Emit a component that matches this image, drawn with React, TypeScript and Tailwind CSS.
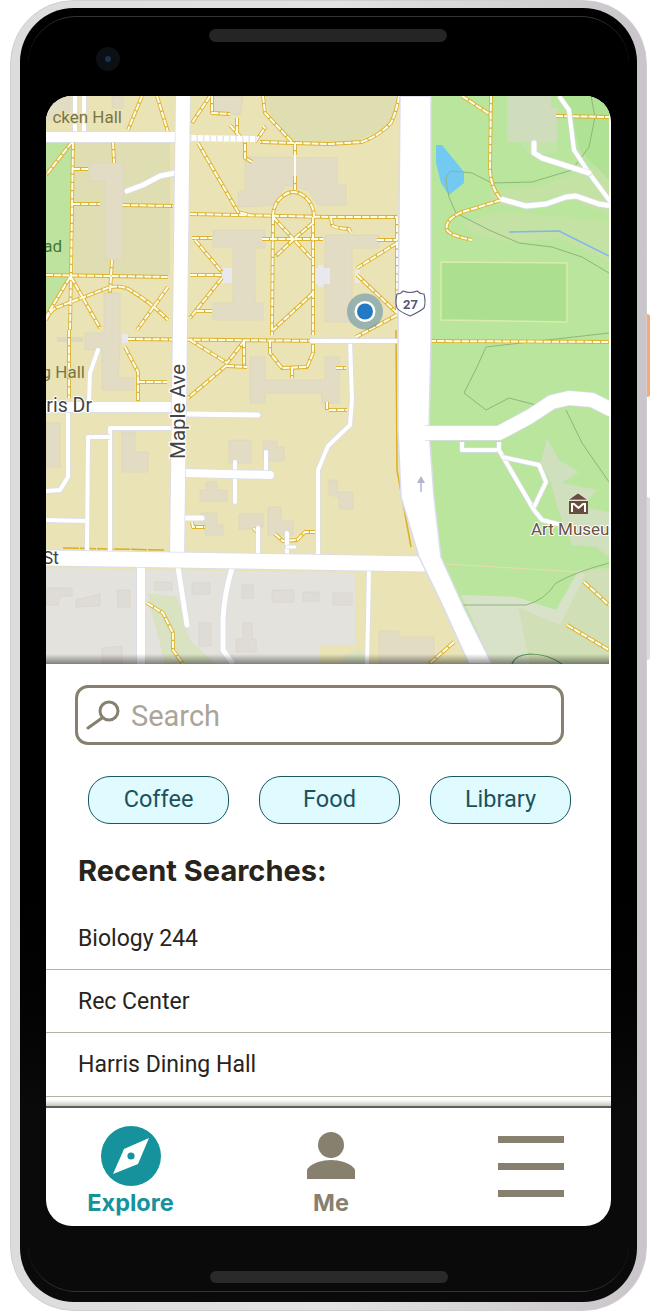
import React from "react";

const ROAD = "#d9dcec";
const Road = ({ d, w = 4, cap = "round" }: { d: string; w?: number; cap?: "round" | "butt" }) => (
  <g fill="none" strokeLinejoin="round" strokeLinecap={cap}>
    <path d={d} stroke={ROAD} strokeWidth={w + 1.4} />
    <path d={d} stroke="#ffffff" strokeWidth={w} />
  </g>
);

const trails = [
  "M462 96L491 115","M491 96L490 167Q490 187 501 199","M501 200L479 207L462 212Q444 220 447 230Q449 235 472 240","M556 116L609 117",
  "M429 341L609 342","M399 96Q397 110 391 123Q380 135 362 142L329 144L293 143L260 142","M263 96L265 113L293 143","M230 125L245 142L245 158L252 162","M237 118L237 135",
  "M295 143L295 155","M295 176L295 190","M273 217Q273 203 283 196Q293 188 304 196Q314 204 314 217","M190 214L329 217L397 217",
  "M198 143L238 212L250 215","M331 217L332 225Q334 228 349 229L351 233","M273 217L272 335","M313 217L313 335","M273 217L313 260","M313 223L295 238L276 256","M262 239L323 239",
  "M192 238L212 238","M195 240L222 272","M190 275L222 275","M222 278L190 318","M197 311L212 311","M313 293L273 330","M270 340L270 353L282 368L307 367L313 353L313 340","M292 368L292 378",
  "M128 339L329 341","M190 340L227 363L245 340","M227 365L188 398","M227 366L247 367","M244 340L244 365","M125 347L138 372L138 402","M138 382L167 382","M69 330L69 398",
  "M73 142L71 275L70 330","M73 169L88 169","M73 204L100 204","M123 205L173 206","M46 275L168 277","M113 142L114 163","M112 260L110 293","M71 277L100 328","M70 277L46 317",
  "M46 320Q50 310 58 307L110 287Q125 285 133 292Q150 302 168 320","M168 287L137 330","M142 96L128 130","M157 96L168 132","M210 96L192 123","M212 96L212 113L230 114","M72 142L46 175",
  "M397 217L397 313","M397 243L357 268","M357 275L397 313","M377 240L397 240","M397 315L356 337","M584 582L609 605","M567 625L609 650","M454 642L429 664",
  "M147 603L163 613L173 633L173 650L183 664","M192 522L193 527L205 527","M253 528L258 533","M275 534L283 541L297 540L305 532L315 532","M336 368L346 368","M329 410L347 410","M327 402L327 410","M255 142L265 128L263 126",
];

const buildings = [
  "90,163 123,163 123,260 105,260 105,181 90,181","112,96 123,96 123,108 112,108","213,96 243,96 240,115 213,112","46,96 70,96 70,120 46,120",
  "245,157 337,158 337,185 346,185 346,205 318,205 308,190 285,185 275,205 238,207 238,192 245,190",
  "213,230 265,230 265,248 255,248 255,303 263,303 263,320 213,320 213,303 233,303 233,247 213,247",
  "325,235 379,235 379,248 352,248 352,322 325,322","85,333 104,333 104,293 120,293 120,348 118,378 134,378 134,390 102,390 102,350 85,350",
  "46,423 60,423 60,467 46,467","122,432 135,432 135,452 148,452 148,472 122,472","229,440 251,440 251,463 229,463","263,441 277,441 277,447 284,447 284,461 263,461",
  "250,357 265,357 265,380 325,380 325,357 339,357 339,403 322,403 322,393 265,393 265,403 250,403",
  "200,490 206,490 206,482 217,482 217,490 227,490 227,501 200,501","200,513 217,513 217,525 223,525 223,535 205,535 205,523 200,523","239,514 263,514 263,527 239,530",
  "268,507 281,507 281,521 293,521 293,535 268,535","329,480 337,480 337,492 353,492 353,509 339,509 339,497 329,495","379,631 399,631 399,637 434,637 434,664 379,664",
];

const greyBuildings = [
  "46,588 72,588 72,596 60,596 58,605 46,605","76,600 100,594 100,606 76,607","117,590 130,590 130,607 118,607","155,582 172,582 172,590 155,590","192,583 210,583 210,594 192,594",
  "199,623 211,623 211,646 199,646","242,585 253,585 253,598 242,598","272,590 294,590 294,602 272,602","303,592 319,592 319,601 303,601","243,623 252,623 252,639 256,639 256,652 236,652 236,639 243,639",
  "102,648 122,646 122,664 102,664","333,593 352,593 352,605 333,605",
];

function MapView() {
  return (
    <svg viewBox="46 96 563 568" width={563} height={568} className="block font-['Roboto',sans-serif]">
      <rect x="46" y="96" width="563" height="568" fill="#eae3b6" />
      <path d="M46 141H73L71 275L46 318Z" fill="#bde39e" />
      <rect x="74" y="143" width="96" height="132" fill="#dfdeb2" />
      <path d="M265 96H400Q396 120 380 130L355 142H290Q272 130 265 96Z" fill="#dfdeb2" />
      <path d="M430 96H609V664H470L430 560Z" fill="#b9e69c" />
      <path d="M46 568L355 573V645H320L320 664H46Z" fill="#e4e2dc" />
      <path d="M147 593L177 597L190 640L215 664H165Z" fill="#d9e3c2" />
      <path d="M340 664L345 655L360 650L368 664Z" fill="#d9e3c2" />

      <path d="M490 190L540 186L600 165L609 165V215L560 195L510 208L490 200Z" fill="#c3e2a4" />
      <path d="M460 222L500 212L560 216L609 222V262L560 238L510 243L470 232Z" fill="#c3e2a4" />
      <path d="M560 96H609V180L580 150L570 110Z" fill="#addf90" opacity="0.7" />
      <polygon points="520,142 557,142 557,152 530,155" fill="#c3e4a9" />
      <polygon points="507,96 551,96 551,108 557,108 557,142 507,142" fill="#cfddbd" />
      <polygon points="436,145 442,145 464,172 464,183 449,195 441,183 436,163" fill="#72c9f1" />
      <polygon points="441,262 567,263 567,322 441,320" fill="#acdf8e" stroke="#d9ecac" strokeWidth="1.5" />
      <path d="M509 232L559 231L609 256" fill="none" stroke="#7cb7ee" strokeWidth="1.5" />
      <g fill="none" stroke="#8fb57c" strokeWidth="1">
        <path d="M453 171Q446 172 446 182L449 197L456 213L489 230L519 243L552 247L582 257L609 273" />
        <path d="M453 171L472 173L492 183L532 182L572 170L589 147L595 117L591 96" />
        <path d="M609 333L486 347L477 367L464 393L486 410L509 398L536 405" />
        <path d="M566 410L582 443L609 482" />
      </g>
      <polygon points="461,595 516,597 556,610 579,570 609,568 609,664 492,664" fill="#d0dfb6" />
      <polygon points="461,595 516,597 530,664 492,664" fill="#d7e2c8" />
      <polygon points="516,597 556,610 579,570 585,575 560,625 500,600" fill="#d7e2c8" />
      <path d="M446 564L579 572" stroke="#e8dcb0" strokeWidth="1" fill="none" />
      <path d="M462 605L526 605Q545 600 556 583Q575 572 609 563" stroke="#8fb57c" strokeWidth="1" fill="none" />
      <path d="M512 664Q515 655 530 654Q548 654 562 664" stroke="#5d9a55" strokeWidth="1.2" fill="none" />
      <polygon points="547,438 559,460 579,472 562,483 597,490 582,507 609,512 609,557 596,547 572,545 557,507 551,483 541,462" fill="#d0dfbe" />

      {buildings.map((p) => (<polygon key={p} points={p} fill="#e2dcc4" stroke="#dcd6bd" strokeWidth="0.8" />))}
      {greyBuildings.map((p) => (<polygon key={p} points={p} fill="#dfdcd6" stroke="#d8d5ce" strokeWidth="0.8" />))}
      <rect x="57" y="337" width="26" height="5" fill="#ddd8c4" />
      <rect x="221" y="268" width="11" height="15" fill="#e8e8ee" />
      <path d="M313 268H318V265H323V268H330V284H323V287H318V284H313Z" fill="#e8e8ee" />
      <rect x="355" y="270" width="5" height="13" fill="#e8e8ee" />
      <rect x="122" y="334" width="6" height="9" fill="#e8e8ee" />

      {trails.map((d) => (<path key={d} d={d} fill="none" stroke="#dcb32a" strokeWidth="3.8" strokeLinejoin="round" />))}
      {trails.map((d) => (<path key={d + "w"} d={d} fill="none" stroke="#fffdf0" strokeWidth="2" strokeDasharray="7 1.2" />))}
      <path d="M63 548L165 550" fill="none" stroke="#d9b01f" strokeWidth="1.5" strokeDasharray="16 1" />
      <path d="M295 155L295 176" stroke="#fffdf0" strokeWidth="2" />
      <path d="M396 330L397 470L411 547" fill="none" stroke="#d9b01f" strokeWidth="1.5" />

      <path d="M190 138L257 139" stroke="#ffffff" strokeWidth="6" />
      <path d="M190 138L257 139" stroke="#e3e5ef" strokeWidth="6" strokeDasharray="1.5 5" />
      <Road d="M75 96V132" w={4} cap="butt" />
      <Road d="M84 96V132" w={4} cap="butt" />
      <Road d="M46 137H175" w={10} cap="butt" />
      <Road d="M127 191L143 185L160 176L175 173" w={5} />
      <Road d="M187 414L258 415" w={5} />
      <Road d="M68 410V477L60 490L46 491" w={4} />
      <Road d="M98 350L90 373L89 402" w={4} />
      <Road d="M172 428H110V552" w={4} cap="butt" />
      <Road d="M110 437H88L87 552" w={4} cap="butt" />
      <Road d="M46 520L85 521" w={4} cap="butt" />
      <Road d="M46 407L172 407" w={10} cap="butt" />
      <Road d="M235 462V502" w={4} />
      <Road d="M266 452V473" w={4} />
      <Road d="M185 473L270 475" w={8} />
      <Road d="M185 518L202 518" w={5} />
      <Road d="M258 528V553" w={4} />
      <Road d="M287 533V553" w={4} />
      <Road d="M287 547H295" w={3} />
      <Road d="M318 556V470L328 446L350 425L352 400L350 341" w={4} cap="butt" />
      <Road d="M310 341H401" w={4} cap="butt" />
      <Road d="M141 567V664" w={8} cap="butt" />
      <Road d="M178 567L187 625" w={5} />
      <Road d="M232 568Q224 595 223 620V650L233 664" w={5} cap="butt" />
      <Road d="M369 571L367 664" w={4} cap="butt" />
      <Road d="M183 96L177 560" w={14} cap="butt" />
      <Road d="M46 558L425 564" w={15} cap="butt" />
      <polygon points="400,96 398,340 398,430 401,497 419,557 440,600 469,664 492,664 465,610 441,557 434,497 429,430 431,340 431,96" fill="#ffffff" stroke={ROAD} strokeWidth="1.5" />
      <Road d="M425 433L499 433L529 417L552 402L569 398L592 400L612 410" w={14} cap="butt" />
      <Road d="M462 442V450H499V442" w={4} cap="butt" />
      <Road d="M499 450L534 510L542 520L562 525" w={4} cap="butt" />
      <Road d="M502 457L539 465L546 482L534 507" w={4} cap="butt" />
      <Road d="M559 96L569 110L574 150L589 173L612 204" w={4} cap="butt" />
      <Road d="M534 143V153L542 158L589 173" w={5} />
      <Road d="M501 199L526 206L546 204L566 197L576 196L599 204L612 206" w={5} cap="butt" />
      <path d="M421 492L421 480" stroke="#b0b5cc" strokeWidth="1.5" />
      <path d="M421 476L417 483H425Z" fill="#b0b5cc" />

      <g fontSize="17" paintOrder="stroke" stroke="#eae3b6" strokeWidth="2" strokeLinejoin="round">
        <text x="122" y="123" textAnchor="end" fill="#7b7545">cken Hall</text>
        <text x="85" y="378" textAnchor="end" fill="#7b7545">g Hall</text>
        <text x="62" y="252" textAnchor="end" fill="#3f7a35" stroke="#bde39e">ad</text>
        <text x="92" y="412" fontSize="19.5" textAnchor="end" fill="#444444" stroke="#ffffff">ris Dr</text>
        <text x="59" y="564" fontSize="18" textAnchor="end" fill="#444444" stroke="#ffffff">St</text>
        <text x="531" y="535" fill="#6a5248" stroke="#ffffff">Art Museu</text>
      </g>
      <text transform="translate(185 459) rotate(-90)" fontSize="20.5" fill="#444444" stroke="#ffffff" strokeWidth="2.5" paintOrder="stroke">Maple Ave</text>

      <path d="M578 493L588 500H568Z" fill="#6a4c3e" stroke="#fff" strokeWidth="0.6" />
      <rect x="569" y="501" width="19" height="13" fill="#6a4c3e" />
      <path d="M572 512V504H574L578.5 508L583 504H585V512" fill="none" stroke="#ffffff" strokeWidth="2" />

      <path d="M397 294Q401 294 403 291Q410 294 417 291Q420 294 424 294Q426 302 424 308Q419 312 410 316Q400 312 397 308Q395 302 397 294Z" fill="#ffffff" stroke="#5b5a7c" strokeWidth="1.1" />
      <text x="410.5" y="309" textAnchor="middle" fontSize="13" fontWeight="700" fill="#555577">27</text>

      <circle cx="365" cy="311.5" r="18" fill="#5a8ca8" opacity="0.55" />
      <circle cx="365" cy="311.5" r="10.5" fill="#ffffff" />
      <circle cx="365" cy="311.5" r="8" fill="#2379c2" />
    </svg>
  );
}

const Chip = ({ label }: { label: string }) => (
  <div className="w-[141px] h-[48px] rounded-[22px] border-[1.5px] border-[#19575f] bg-[#e0fbff] flex items-center justify-center text-[23.5px] text-[#1c5259]">
    {label}
  </div>
);

const Row = ({ label, h }: { label: string; h: string }) => (
  <div className={`${h} border-b border-[#b5b4a1] pl-[32px] flex items-center text-[23px] text-[#28241c]`}>{label}</div>
);

export default function App() {
  return (
    <div className="w-[658px] h-[1316px] bg-white pl-[10px] relative overflow-hidden font-['Roboto',sans-serif]">
      <div className="absolute left-[645px] top-[314px] w-[5px] h-[83px] rounded-[3px] bg-[#f9a878]" />
      <div className="absolute left-[645px] top-[497px] w-[5px] h-[163px] rounded-[3px] bg-[#dcdcdc]" />
      <div className="relative w-[637px] h-[1311px] rounded-[64px] bg-linear-to-r from-[#dcdcdc] via-[#e4e2e4] to-[#c9c5ca] pt-[7px] pb-[8px] px-[10px] border border-[#cfcfcf]">
        <div className="relative h-full -mx-px rounded-[54px] bg-linear-to-b from-[#000000] from-60% to-[#0a0a0a] to-85% flex flex-col overflow-hidden">
          <div className="absolute inset-x-[8px] top-[8px] bottom-[10px] rounded-[48px] border-y border-[#333333]" />
          <div className="absolute left-[76px] top-[39px] w-[24px] h-[24px] rounded-full bg-[#0c0f14] flex items-center justify-center">
            <div className="w-[6px] h-[6px] rounded-full bg-[#1b3350]" />
          </div>
          <div className="h-[88px] flex justify-center pt-[21px] pr-[1px]">
            <div className="w-[238px] h-[13px] rounded-full bg-[#252525]" />
          </div>
          <div className="relative flex-1 ml-[26px] mr-[26px] bg-white rounded-[26px] overflow-hidden flex flex-col">
            <div className="relative h-[568px] shrink-0">
              <MapView />
              <div className="absolute left-0 bottom-0 h-[10px] bg-linear-to-b from-transparent to-[#00000070] w-[563px]" />
            </div>
            <div className="flex-1 flex flex-col">
              <div className="pt-[21px] pl-[29px]">
                <div className="w-[489px] h-[60px] rounded-[13px] border-[3px] border-[#87806f] flex items-center pl-[8px] gap-[9px]">
                  <svg width="36" height="32" viewBox="0 0 36 32" fill="none" stroke="#87806f" strokeWidth="3">
                    <circle cx="23" cy="12" r="9" />
                    <path d="M16 19L2 29" strokeLinecap="round" />
                  </svg>
                  <span className="text-[29px] text-[#aaa598] pt-[3px]">Search</span>
                </div>
              </div>
              <div className="flex gap-[30px] pl-[42px] pt-[31px]">
                <Chip label="Coffee" />
                <Chip label="Food" />
                <Chip label="Library" />
              </div>
              <div className="pl-[32px] pt-[29px] h-[76px] font-['Inter',sans-serif] font-bold text-[29px] leading-[36px] text-[#28241c]">
                Recent Searches:
              </div>
              <Row label="Biology 244" h="h-[70px] pt-[9px]" />
              <Row label="Rec Center" h="h-[63px] pt-[2px]" />
              <Row label="Harris Dining Hall" h="h-[64px] pt-[2px]" />
              <div className="flex-1 bg-linear-to-b from-white from-30% to-[#c8c8c0] border-b-2 border-[#5f5f58]" />
            </div>
            <div className="h-[118px] shrink-0 flex font-['Inter',sans-serif] font-bold text-[23.5px] leading-[30px]">
              <div className="w-[169px] flex flex-col items-center pt-[17px] gap-[2px] text-[#16929d]">
                <svg width="62" height="62" viewBox="0 0 62 62">
                  <circle cx="31" cy="31" r="30" fill="#16929d" />
                  <path d="M49 13L38 39L13 49L24 24Z" fill="#ffffff" />
                  <circle cx="31" cy="31" r="3.6" fill="#16929d" />
                </svg>
                <span className="-mt-[1px]">Explore</span>
              </div>
              <div className="w-[232px] flex flex-col items-center pt-[24px] text-[#87806f]">
                <svg width="50" height="48" viewBox="0 0 50 48" fill="#87806f">
                  <circle cx="25" cy="13" r="13" />
                  <path d="M1 47V39Q1 34 12 30Q25 26 38 30Q49 34 49 39V47Z" />
                </svg>
                <span className="mt-[8px]">Me</span>
              </div>
              <div className="flex flex-col gap-[20px] pt-[28px] pl-[51px]">
                <div className="w-[66px] h-[7px] bg-[#87806f]" />
                <div className="w-[66px] h-[7px] bg-[#87806f]" />
                <div className="w-[66px] h-[7px] bg-[#87806f]" />
              </div>
            </div>
          </div>
          <div className="h-[76px] flex justify-center pt-[45px]">
            <div className="w-[238px] h-[12px] rounded-full bg-[#2a2a2a]" />
          </div>
        </div>
      </div>
    </div>
  );
}
